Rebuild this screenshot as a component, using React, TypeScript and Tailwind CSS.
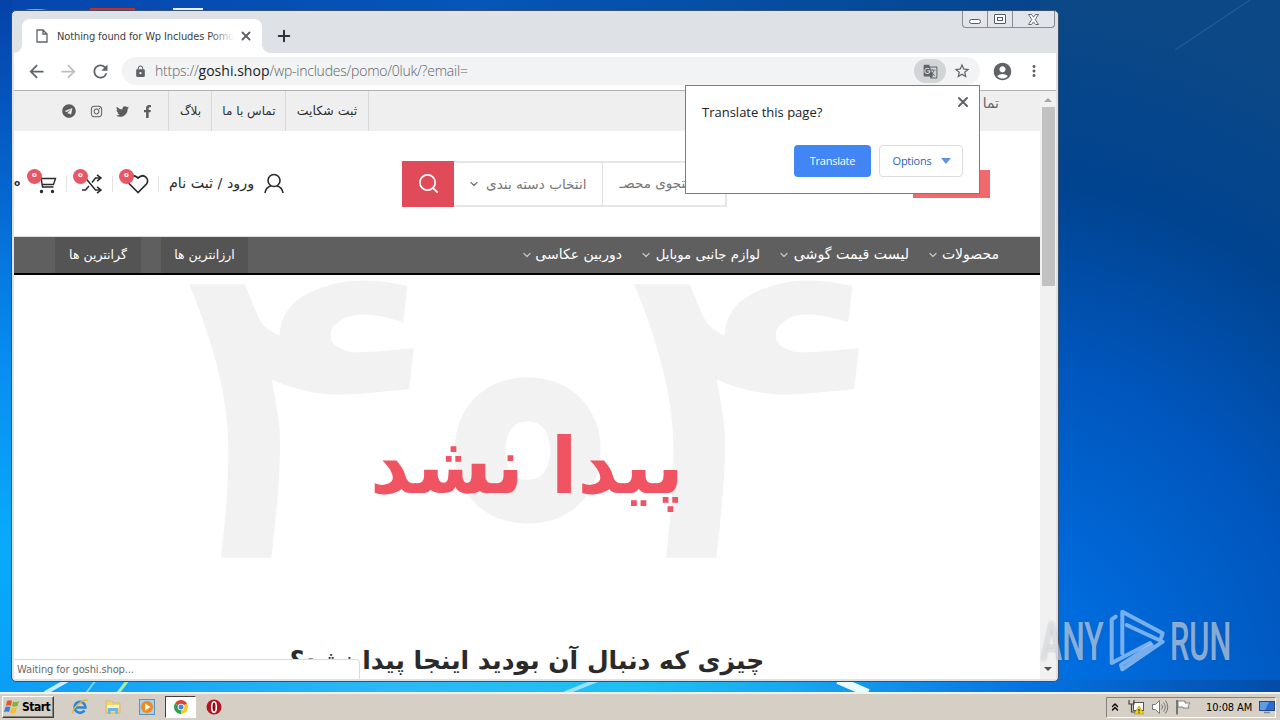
import type { ReactNode } from "react";
import { FaFacebookF, FaInstagram, FaTelegram, FaTwitter } from "react-icons/fa";
import {
  MdAccountCircle,
  MdArrowBack,
  MdArrowForward,
  MdGTranslate,
  MdLock,
  MdMoreVert,
  MdRefresh,
  MdStarBorder,
} from "react-icons/md";
import { ChevronDown, ChevronsUp, Plus, Search, X } from "lucide-react";

const menu = [
  { label: "دوربین عکاسی", width: "w-[99px]", size: "text-[14px]" },
  { label: "لوازم جانبی موبایل", width: "w-[118px]", size: "text-[13.3px]" },
  { label: "لیست قیمت گوشی", width: "w-[129px]", size: "text-[14.2px]" },
  { label: "محصولات", width: "w-[70px]", size: "text-[14px]" },
];

function Wallpaper() {
  return (
    <svg className="absolute inset-0" width="1280" height="720" viewBox="0 0 1280 720">
      <defs>
        <linearGradient id="left" x1="0" y1="0" x2="0" y2="1">
          <stop offset="0" stopColor="#0442a8" />
          <stop offset="0.25" stopColor="#0564cd" />
          <stop offset="0.5" stopColor="#078df0" />
          <stop offset="0.75" stopColor="#0aaaf9" />
          <stop offset="1" stopColor="#089ef6" />
        </linearGradient>
        <linearGradient id="top" x1="0" y1="0" x2="1" y2="0">
          <stop offset="0" stopColor="#0646ae" />
          <stop offset="0.45" stopColor="#0456b8" />
          <stop offset="1" stopColor="#06458c" />
        </linearGradient>
        <linearGradient id="bottom" x1="0" y1="0" x2="1" y2="0">
          <stop offset="0" stopColor="#0c9df5" />
          <stop offset="0.3" stopColor="#2cb8f5" />
          <stop offset="0.5" stopColor="#1dc0f2" />
          <stop offset="0.62" stopColor="#18a7f0" />
          <stop offset="0.8" stopColor="#0673e2" />
          <stop offset="1" stopColor="#034ca8" />
        </linearGradient>
        <radialGradient id="right" gradientUnits="userSpaceOnUse" cx="960" cy="710" r="720">
          <stop offset="0" stopColor="#0078ea" />
          <stop offset="0.22" stopColor="#006bdc" />
          <stop offset="0.5" stopColor="#0056bd" />
          <stop offset="0.75" stopColor="#00438f" />
          <stop offset="1" stopColor="#0c4886" />
        </radialGradient>
      </defs>
      <rect width="1280" height="720" fill="url(#left)" />
      <rect x="12" width="1030" height="14" fill="url(#top)" />
      <rect x="1040" width="240" height="720" fill="url(#right)" />
      <rect x="0" y="680" width="1280" height="14" fill="url(#bottom)" />
      <path d="M1175 50 1250 0" stroke="#3b78b8" strokeWidth="1.5" opacity=".35" />
      <path d="M45 693 68 680" stroke="#c9efff" strokeWidth="4" />
      <path d="M86 693 96 680" stroke="#7fd6fb" strokeWidth="2" />
      <path d="M118 693 128 680" stroke="#a5ecae" strokeWidth="3" />
      <path d="M565 693 598 680" stroke="#9be2fb" strokeWidth="4" />
      <path d="M838 680 868 693" stroke="#e8fbff" strokeWidth="8" />
      <path d="M24 10q11-2 24 0" fill="#8ea9cf" />
      <rect x="90" y="8" width="45" height="2" fill="#c9301f" />
      <rect x="173" y="8" width="30" height="2" fill="#e9eef5" />
    </svg>
  );
}

function WindowControls() {
  return (
    <div className="absolute top-0 right-[3px] flex h-[17px] w-[93px] rounded-b border border-t-0 border-[#878c94] bg-[#e3e5ea]">
      <div className="flex w-[25px] items-center justify-center border-r border-[#878c94] pt-1">
        <div className="h-[5px] w-3 rounded-sm border border-[#555b66] bg-white" />
      </div>
      <div className="flex w-[25px] items-center justify-center border-r border-[#878c94]">
        <div className="flex h-[10px] w-3 items-center justify-center rounded-[1px] border border-[#555b66] bg-white">
          <div className="h-1 w-1.5 border border-[#555b66]" />
        </div>
      </div>
      <div className="flex flex-1 items-center justify-center">
        <svg width="13" height="11" viewBox="0 0 13 11">
          <path d="M1.500.5h3l2 2.600 2-2.600h3l-3.300 5 3.300 5h-3l-2-2.600-2 2.600h-3l3.300-5z" fill="#fff" stroke="#555b66" strokeWidth=".9" />
        </svg>
      </div>
    </div>
  );
}

function TabStrip() {
  return (
    <div className="flex h-[42px] items-end pl-2">
      <div className="relative flex h-[34px] w-[240px] items-center rounded-t-lg bg-white pl-[14px]">
        <div className="absolute bottom-0 -left-2 size-2 bg-[radial-gradient(circle_at_0_0,#dee1e6_7.5px,#fff_8px)]" />
        <div className="absolute -right-2 bottom-0 size-2 bg-[radial-gradient(circle_at_100%_0,#dee1e6_7.5px,#fff_8px)]" />
        <svg width="12" height="14" viewBox="0 0 12 14" fill="none" stroke="#5f6368" strokeWidth="1.3">
          <path d="M1 1h6l4 4v8H1zM7 1v4h4" />
        </svg>
        <div className="relative mt-0.5 ml-[9px] w-[177px] overflow-hidden font-['DejaVu_Sans_Condensed','DejaVu_Sans',sans-serif] text-[11px] tracking-[-0.12px] whitespace-nowrap text-[#3c4043]">
          Nothing found for Wp Includes Pomo
          <div className="absolute top-0 right-0 h-full w-6 bg-linear-to-r from-white/0 to-white" />
        </div>
        <X className="ml-[5px] size-[14px] text-[#5f6368]" strokeWidth={3.2} />
      </div>
      <Plus className="mb-[8px] ml-[13px] size-[18px] text-[#303338]" strokeWidth={2.7} />
      <WindowControls />
    </div>
  );
}

function Toolbar() {
  return (
    <div className="flex h-[38px] items-center border-b border-[#b2b2b2] bg-white pb-px pl-3 text-[#5f6368]">
      <MdArrowBack className="size-[21px]" />
      <MdArrowForward className="ml-[11px] size-[21px] text-[#bdc0c3]" />
      <MdRefresh className="ml-[11px] size-[21px]" />
      <div className="ml-[11px] flex h-7 w-[858px] items-center rounded-full bg-[#f1f3f4] pl-3">
        <MdLock className="size-[13px]" />
        <div className="ml-[8px] flex-1 font-['Open_Sans',sans-serif] text-[14px] leading-5 font-light tracking-[-0.23px] text-[#5f6368]">
          https://<span className="font-normal tracking-[0.02px] text-[#202124]">goshi.shop</span>/wp-includes/pomo/0luk/?email=
        </div>
        <div className="flex h-6 w-8 items-center justify-center rounded-full bg-[#d2d4d6]">
          <MdGTranslate className="size-[15px]" />
        </div>
        <MdStarBorder className="mr-[9px] ml-[7px] size-[18px]" />
      </div>
      <MdAccountCircle className="ml-[12px] size-[21px]" />
      <MdMoreVert className="ml-[12px] size-[18px]" />
    </div>
  );
}

function TopBar() {
  return (
    <div className="flex h-10 bg-[#efefef] font-['DejaVu_Sans',sans-serif] text-[12px] text-[#2e2e2e]">
      <div className="flex w-[155px] items-center pl-[48px] text-[#5c5c5c]">
        <FaTelegram className="size-[14px]" />
        <FaInstagram className="ml-[14px] size-[13px]" />
        <FaTwitter className="ml-[13px] size-[13px]" />
        <FaFacebookF className="ml-[12px] size-[13px]" />
      </div>
      <div dir="rtl" className="flex w-[43px] items-center justify-center shadow-[-1px_0_#d9d9d9]">بلاگ</div>
      <div dir="rtl" className="flex w-[74px] items-center justify-center whitespace-nowrap shadow-[-1px_0_#d9d9d9]">تماس با ما</div>
      <div dir="rtl" className="flex w-[82px] items-center justify-center text-[12.500px] whitespace-nowrap shadow-[-1px_0_#d9d9d9,1px_0_#d9d9d9]">ثبت شکایت</div>
      <div dir="rtl" className="flex-1 pt-[3px] pr-[41px] text-[14px] leading-[18px] text-[#666]">تما</div>
    </div>
  );
}

function CountIcon({ children }: { children: ReactNode }) {
  return (
    <div className="relative flex h-4 w-[46px] items-center justify-center border-r border-[#e3e3e3]">
      {children}
      <span className="absolute -top-[7px] left-[6px] flex size-[15px] items-center justify-center rounded-full bg-[#e95765] pb-px font-['DejaVu_Sans',sans-serif] text-[7px] leading-none font-bold text-white">o</span>
    </div>
  );
}

function SiteHeader() {
  return (
    <div className="flex h-[105px] items-center font-['DejaVu_Sans',sans-serif] text-[#2b2b2b]">
      <span className="w-[7px] text-[9px] font-bold">o</span>
      <div className="flex">
        <CountIcon>
          <svg className="ml-1.5 shrink-0" width="20" height="20" viewBox="0 0 20 20" fill="none" stroke="#2b2b2b" strokeWidth="1.4">
            <path d="M1 3.500h3l1.500 9.500h11M4.500 4.500h14l-2 6H5.500" />
            <circle cx="4.500" cy="17.500" r="1" fill="#2b2b2b" />
            <circle cx="15.500" cy="17.500" r="1" fill="#2b2b2b" />
          </svg>
        </CountIcon>
        <CountIcon>
          <svg className="ml-1 shrink-0" width="22" height="20" viewBox="0 0 22 20" fill="none" stroke="#2b2b2b" strokeWidth="1.5">
            <path d="M1 4h3.500l10 12H20M1 16h3.500l3.500-4M11 8.500 14.500 4H20M16 .8 20 4l-4 3.200M16 12.800l4 3.200-4 3.200" />
          </svg>
        </CountIcon>
        <CountIcon>
          <svg className="ml-1 shrink-0" width="22" height="20" viewBox="0 0 22 20" fill="none" stroke="#2b2b2b" strokeWidth="1.7">
            <path d="M11 18.500 2.500 10C-1 5 5-1.500 11 4c6-5.500 12 1 8.500 6z" />
          </svg>
        </CountIcon>
      </div>
      <div className="flex w-[243px] items-center">
        <span dir="rtl" className="ml-[10px] text-[14.300px] whitespace-nowrap">ورود / ثبت نام</span>
        <svg className="ml-[10px]" width="20" height="21" viewBox="0 0 20 21" fill="none" stroke="#2b2b2b" strokeWidth="1.6">
          <circle cx="10" cy="7.500" r="6" />
          <path d="M1 20c.5-4 3-6.300 6-7M19 20c-.5-4-3-6.300-6-7" />
        </svg>
      </div>
      <div className="flex h-[46px] w-[325px]">
        <div className="flex w-[52px] items-center justify-center bg-[#e04a59]">
          <Search className="size-[23px] text-white" strokeWidth={1.8} />
        </div>
        <div className="flex flex-1 items-center border-2 border-l-0 border-[#e6e6e6] text-[#777]">
          <div className="flex h-full w-[149px] items-center border-r border-[#e0e0e0] pl-[14px]">
            <ChevronDown className="size-[12px]" strokeWidth={2.5} />
            <span dir="rtl" className="mt-0.5 ml-1.5 text-[13.600px] whitespace-nowrap">انتخاب دسته بندی</span>
          </div>
          <div dir="rtl" className="flex-1 overflow-hidden pr-[19px] text-[13.500px] whitespace-nowrap">جستجوی محصـ</div>
        </div>
      </div>
      <div className="ml-[186px] h-[28px] w-[77px] bg-[#f1696d]" />
    </div>
  );
}

function SiteNav() {
  return (
    <div className="flex h-[39px] items-center border-t border-b-2 border-t-[#ddd] border-b-black bg-[#5f5f5f] px-[41px] font-['DejaVu_Sans',sans-serif] text-white">
      <div dir="rtl" className="flex h-full w-[86px] items-center justify-center bg-[#545454] text-[12.500px]">گرانترین ها</div>
      <div dir="rtl" className="ml-5 flex h-full w-[87px] items-center justify-center bg-[#545454] text-[12.500px]">ارزانترین ها</div>
      <div className="mb-px ml-auto flex items-center gap-5">
        {menu.map((item) => (
          <div key={item.label} className={`flex items-center justify-between ${item.width}`}>
            <ChevronDown className="mt-0.5 -ml-0.5 size-3 shrink-0 text-[#c4c4c4]" strokeWidth={2.5} />
            <span dir="rtl" className={`whitespace-nowrap ${item.size}`}>{item.label}</span>
          </div>
        ))}
      </div>
    </div>
  );
}

function NotFound() {
  return (
    <div className="relative flex flex-1 flex-col items-center overflow-hidden bg-white font-['DejaVu_Sans',sans-serif] font-bold">
      <div className="flex h-[283px] w-[681px] items-end justify-between text-[387px] leading-[267px] font-normal text-[#f2f2f2]">
        <span className="w-[236px] origin-bottom-left translate-x-[-47px] -skew-x-[5.3deg] scale-x-[1.36] scale-y-[1.1] [-webkit-text-stroke:3px_#f2f2f2]">۴</span>
        <span className="translate-x-px scale-x-[1.1] font-['Inter',sans-serif] text-[212px] leading-[250px] [-webkit-text-stroke:27px_#f2f2f2]">o</span>
        <span className="w-[236px] origin-bottom-left translate-x-[-47px] -skew-x-[5.3deg] scale-x-[1.36] scale-y-[1.1] [-webkit-text-stroke:3px_#f2f2f2]">۴</span>
      </div>
      <div dir="rtl" className="absolute top-[145px] left-[356px] text-[78px] leading-[92px] whitespace-nowrap text-[#f05362]">پیدا نشد</div>
      <div dir="rtl" className="mt-[87px] text-[25px] leading-9 whitespace-nowrap text-[#2a2a2a]">چیزی که دنبال آن بودید اینجا پیدا نشد؟</div>
      <div className="absolute bottom-0 left-0 h-5 w-[346px] rounded-tr border-t border-r border-[#dcdcdc] bg-white pl-[3px] font-['DejaVu_Sans_Condensed','DejaVu_Sans',sans-serif] text-[11px] leading-[19px] font-normal tracking-[-0.12px] text-[#6b6b6b]">
        Waiting for goshi.shop...
      </div>
    </div>
  );
}

function Scrollbar() {
  return (
    <div className="flex w-4 flex-col items-center bg-[#f1f1f1]">
      <div className="mt-[7px] border-x-4 border-b-4 border-x-transparent border-b-[#a3a3a3]" />
      <div className="mt-[5px] h-[179px] w-[13px] bg-[#c1c1c1]" />
      <div className="mt-auto mb-[8px] border-x-4 border-t-4 border-x-transparent border-t-[#505050]" />
    </div>
  );
}

function TranslatePopup() {
  return (
    <div className="absolute top-[85px] left-[685px] flex h-[109px] w-[295px] flex-col border border-[#7d7d7d] bg-white px-4 font-['Open_Sans',sans-serif]">
      <div className="flex h-[59px] justify-between">
        <span className="mt-[16px] text-[13px] leading-5 text-[#202124]">Translate this page?</span>
        <X className="mt-2 -mr-2 size-4 text-[#5f6368]" strokeWidth={3} />
      </div>
      <div className="flex h-8 justify-end gap-2 text-[11px] tracking-[-0.25px]">
        <div className="flex w-[77px] items-center justify-center rounded bg-[#4285f4] text-white">Translate</div>
        <div className="flex w-[84px] items-center justify-center gap-2.5 rounded border border-[#dadce0] pl-0.5 text-[#2a64b8]">
          Options
          <span className="border-x-[5px] border-t-[6px] border-x-transparent border-t-[#6492da]" />
        </div>
      </div>
    </div>
  );
}

function Watermark() {
  return (
    <div className="absolute top-[607px] left-[1041px] flex h-[66px] w-[190px] items-center font-['Roboto',sans-serif] text-[54px] leading-none font-medium text-white/50 [text-shadow:0_0_3px_rgba(60,70,90,0.35)]">
      <span className="mt-1 w-[67px] origin-left scale-x-[0.59]">ANY</span>
      <svg className="shrink-0" width="61" height="66" viewBox="0 0 61 66" fill="none" stroke="#a9cdf6" strokeOpacity=".7" strokeWidth="4" strokeLinejoin="round" strokeLinecap="round">
        <path d="M7.700 9.700 3.700 12.500v43.500L42 36" />
        <path d="M14.300 46.500V4.700L54.700 26.300l-1.500 4.200" />
        <path d="M18.700 18 54.700 34.700 14.300 62.300 13 58l30.700-20" />
      </svg>
      <span className="mt-1 ml-px w-[61px] origin-left scale-x-[0.57]">RUN</span>
    </div>
  );
}

function Taskbar() {
  return (
    <div className="absolute bottom-0 left-0 flex h-[28px] w-full items-center border-t-2 border-[#f4f2ec] bg-[#d6cfc6] pl-0.5 font-['DejaVu_Sans_Condensed','DejaVu_Sans',sans-serif] text-[11px] text-black">
      <div className="flex h-[22px] w-[52px] items-center gap-0.5 border border-t-white border-r-[#404040] border-b-[#404040] border-l-white pl-px font-bold shadow-[inset_-1px_-1px_#858078]">
        <svg className="shrink-0" width="16" height="16" viewBox="0 0 16 16">
          <path d="M3 2q3-1.500 5 0L6.800 7q-2.300-1.300-5 0z" fill="#e4572a" />
          <path d="M9 2.500q3 1.300 6-.5l-1.500 5q-3 1.500-5.500 0z" fill="#7fb539" />
          <path d="M1.500 8q2.500-1.200 5 0L5 13q-2.300-1.200-5 0z" fill="#3d7fd0" />
          <path d="M7.500 8.500q2.500 1.300 5.500 0l-1.500 5q-3 1.300-5.500 0z" fill="#f5bd2d" />
        </svg>
        <span className="text-[12px] tracking-[-0.5px]">Start</span>
      </div>
      <svg className="ml-[18px]" width="16" height="16" viewBox="0 0 16 16" fill="none">
        <path d="M12.500 11.500A5.500 5.500 0 1 1 13.500 8.500H4" stroke="#2688dc" strokeWidth="2.6" />
        <path d="M1 14.500C-1 10 12-1 15.500 1.500" stroke="#e7b63a" strokeWidth="1.4" />
      </svg>
      <svg className="ml-[17px]" width="16" height="16" viewBox="0 0 16 16">
        <path d="M1 2h6l1 2h7v10H1z" fill="#f0d774" stroke="#cfae4a" strokeWidth=".6" />
        <path d="M2 6h12v3H2z" fill="#fbf1be" />
        <path d="M3 15V9h10v6h-2.500v-3h-5v3z" fill="#6db6e8" />
      </svg>
      <svg className="ml-[18px]" width="16" height="16" viewBox="0 0 16 16">
        <rect x=".5" y=".5" width="15" height="15" fill="#a9cdea" stroke="#5a93c8" />
        <circle cx="8" cy="8" r="6" fill="#f08a1d" />
        <path d="M6 4.500 11.500 8 6 11.500z" fill="#fff" />
      </svg>
      <div className="ml-[10px] flex h-[22px] w-[31px] items-center justify-center border border-t-[#404040] border-r-white border-b-white border-l-[#404040] bg-white">
        <svg width="14" height="14" viewBox="0 0 14 14">
          <path d="M7 7 .94 3.500A7 7 0 0 1 13.060 3.500z" fill="#de4436" />
          <path d="M7 7 13.060 3.500A7 7 0 0 1 7 14z" fill="#f6c928" />
          <path d="M7 7 7 14A7 7 0 0 1 .94 3.500z" fill="#2c9f52" />
          <circle cx="7" cy="7" r="3.300" fill="#fff" />
          <circle cx="7" cy="7" r="2.500" fill="#4384ee" />
        </svg>
      </div>
      <svg className="ml-[10px]" width="16" height="16" viewBox="0 0 16 16">
        <circle cx="8" cy="8" r="7.500" fill="#b3151c" />
        <ellipse cx="8" cy="8" rx="2.300" ry="5.200" fill="#8b0d12" stroke="#fff" strokeWidth="1.6" />
      </svg>
      <div className="mr-1 ml-auto flex h-[21px] w-[170px] items-center border border-t-[#858078] border-r-white border-b-white border-l-[#858078]">
        <ChevronsUp className="ml-[2px] size-3" strokeWidth={2.8} />
        <svg className="ml-[7px]" width="17" height="16" viewBox="0 0 17 16">
          <rect x="5.500" y="3.500" width="10" height="8" fill="#fff" stroke="#555" />
          <path d="M1 1v4h5V1M3.500 5v8h5" fill="none" stroke="#444" strokeWidth="1.2" />
          <path d="M11 7l5 8H6z" fill="#f6d51e" stroke="#a68a00" strokeWidth=".6" />
          <path d="M11 10v2.500M11 13.300v1" stroke="#000" />
        </svg>
        <svg className="ml-[6px]" width="18" height="16" viewBox="0 0 18 16" fill="none" stroke="#777">
          <path d="M1.500 5.500h3l4-4v13l-4-4h-3z" fill="#fff" />
          <path d="M10.500 5.500q2 2.500 0 5M12.500 3.500q3.500 4.500 0 9M14.500 1.500q4.500 6.500 0 13" />
        </svg>
        <svg className="ml-[6px]" width="17" height="16" viewBox="0 0 17 16">
          <path d="M2 1v14.500" stroke="#777" strokeWidth="2" />
          <path d="M3 2h7v2h5l-2 3 1 2H8V8H3z" fill="#fff" stroke="#777" strokeWidth=".9" />
        </svg>
        <span className="mt-0.5 ml-[14px] w-[48px] tracking-[-0.1px] whitespace-nowrap">10:08 AM</span>
        <svg className="ml-[5px] shrink-0" width="16" height="14" viewBox="0 0 16 14">
          <rect x=".5" y="1.500" width="15" height="9" fill="#2c6cd0" stroke="#254a83" />
          <path d="M1 2h9L6 10H1z" fill="#5d9be8" />
          <path d="M5 12.500h6" stroke="#7b8a9e" strokeWidth="1.5" />
        </svg>
      </div>
    </div>
  );
}

export default function App() {
  return (
    <div className="relative h-[720px] w-[1280px] overflow-hidden">
      <Wallpaper />
      <div className="absolute top-[10px] left-[11px] flex h-[672px] w-[1048px] flex-col rounded-[5px] border border-[#37506e] bg-[#dee1e6] px-[2px] pb-[2px]">
        <TabStrip />
        <Toolbar />
        <div className="flex min-h-0 flex-1 bg-white">
          <div className="flex min-w-0 flex-1 flex-col">
            <TopBar />
            <SiteHeader />
            <SiteNav />
            <NotFound />
          </div>
          <Scrollbar />
        </div>
      </div>
      <TranslatePopup />
      <Watermark />
      <Taskbar />
    </div>
  );
}
